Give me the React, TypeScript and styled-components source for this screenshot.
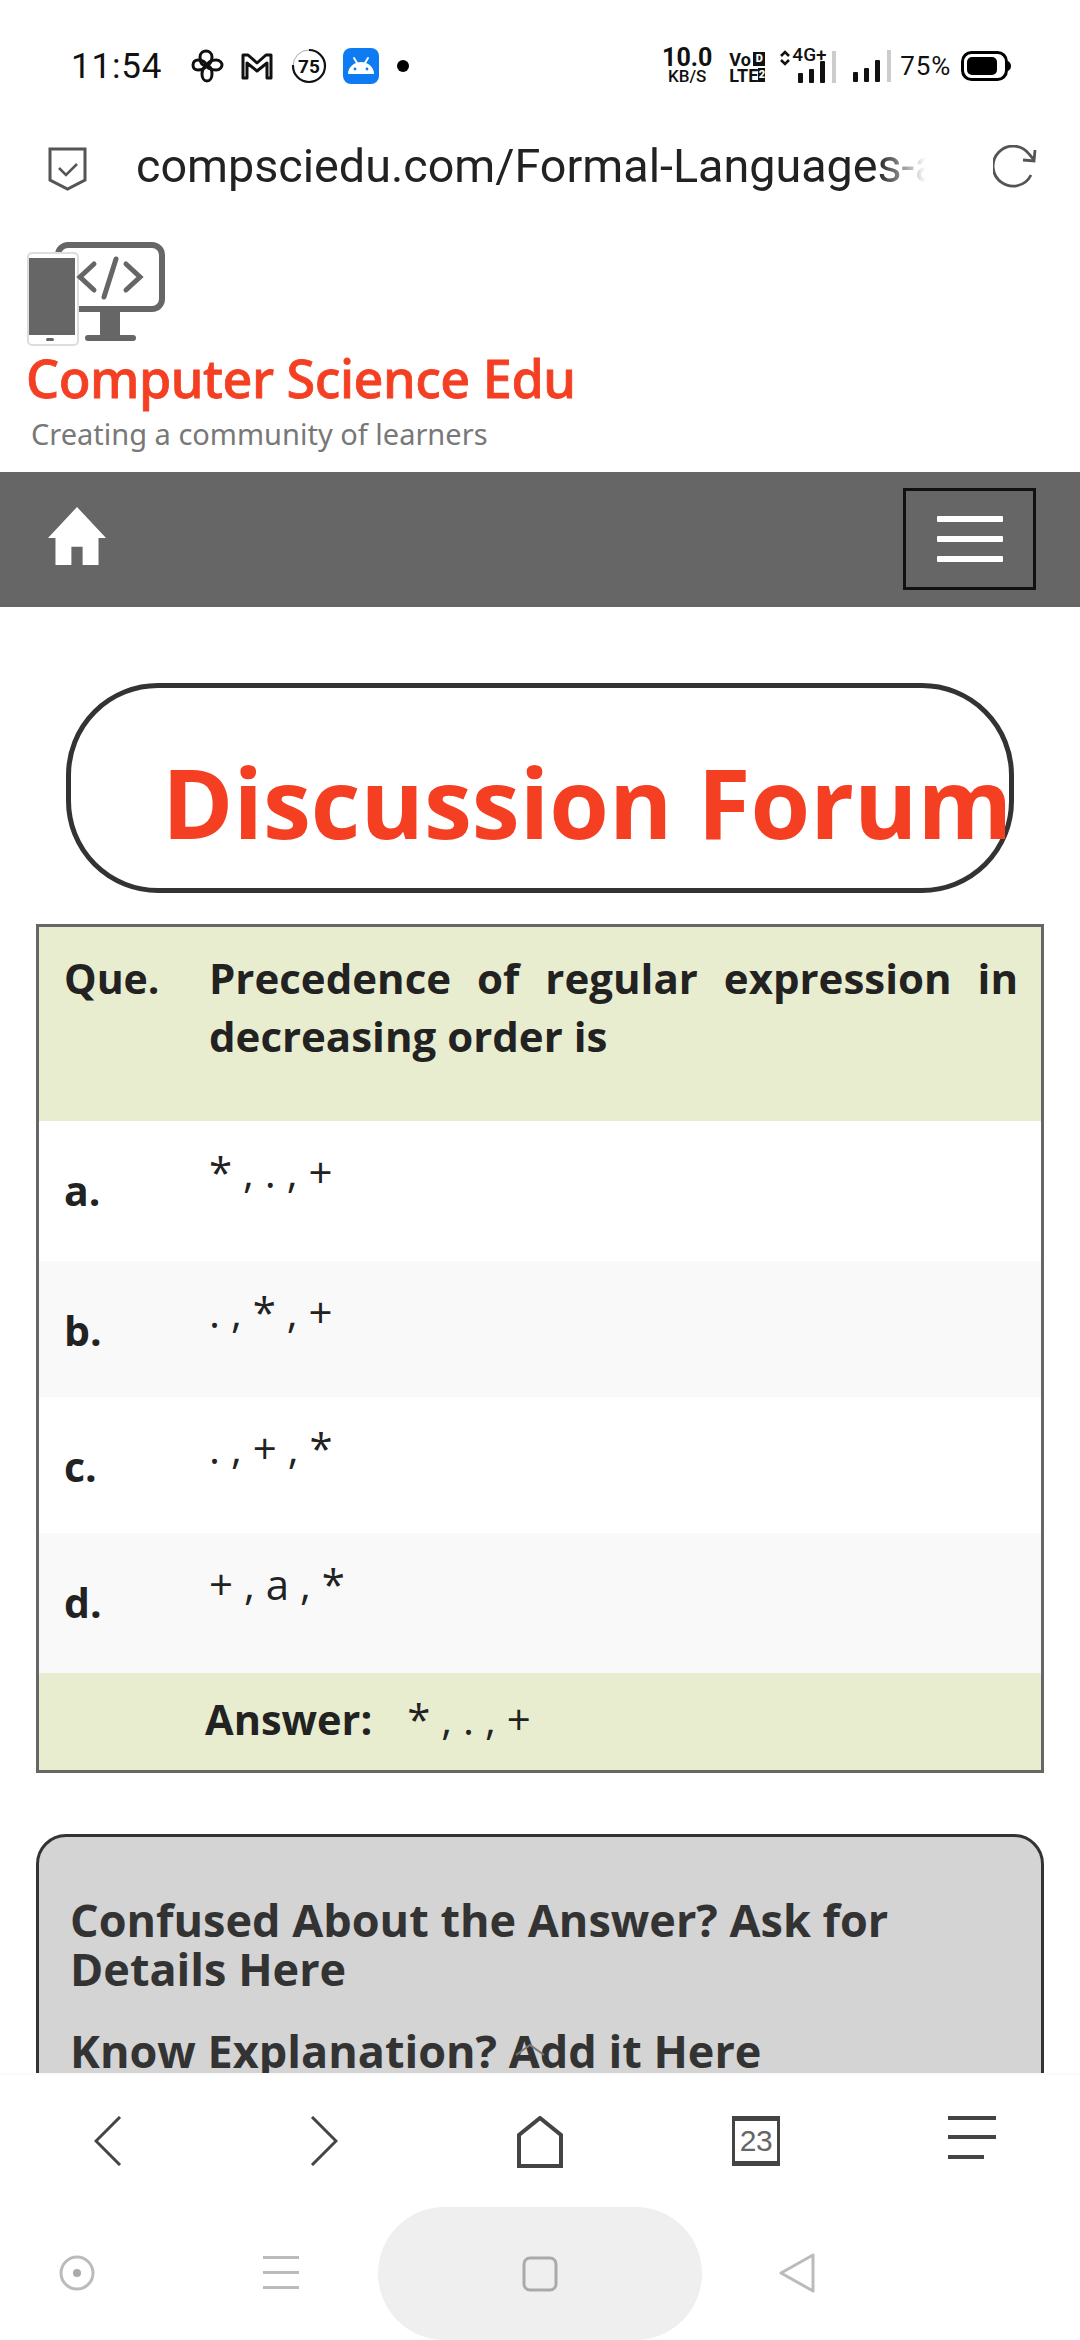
import React from 'react'
import styled, { createGlobalStyle } from 'styled-components'

const GlobalStyle = createGlobalStyle`
  html, body {
    margin: 0;
    padding: 0;
    background: #fff;
  }
`

const Screen = styled.div`
  width: 1080px;
  height: 2340px;
  display: flex;
  flex-direction: column;
  overflow: hidden;
  background: #fff;
  font-family: 'Open Sans', sans-serif;
  color: #222;
`

const StatusBar = styled.div`
  flex: none;
  height: 132px;
  box-sizing: border-box;
  padding: 0 69px 0 71px;
  display: flex;
  align-items: center;
  justify-content: space-between;
  font-family: Roboto, sans-serif;
  color: #111;
`

const StatusGroup = styled.div`
  display: flex;
  align-items: center;
`

const Clock = styled.span`
  font-size: 35px;
  letter-spacing: 0.8px;
  margin-right: 29px;
`

const StatusIcon = styled.svg<{ $gap?: number }>`
  display: block;
  flex: none;
  margin-right: ${(p) => p.$gap ?? 0}px;
`

const Speed = styled.div`
  display: flex;
  flex-direction: column;
  align-items: center;
  font-weight: 700;
  font-size: 25px;
  line-height: 20px;
  margin-right: 17px;

  small {
    font-size: 17px;
    font-weight: 500;
    line-height: 16px;
  }
`

const Volte = styled.div`
  display: flex;
  flex-direction: column;
  font-weight: 700;
  font-size: 18px;
  line-height: 16px;
  margin-right: 15px;
  margin-top: 3px;
`

const VolteLine = styled.div`
  display: flex;
  justify-content: space-between;
  width: 36px;

  b {
    display: inline-block;
    width: 12px;
    height: 14px;
    line-height: 14px;
    background: #111;
    color: #fff;
    font-size: 11px;
    text-align: center;
  }
`

const NetworkSlot = styled.div`
  position: relative;
  width: 58px;
  height: 34px;
  margin-right: 15px;

  span {
    position: absolute;
    left: 12px;
    top: -4px;
    font-size: 19px;
    font-weight: 500;
    line-height: 20px;
  }
`

const Battery = styled.span`
  font-size: 26px;
  letter-spacing: 0.8px;
  margin: 0 10px 0 9px;
`

const AddressBar = styled.div`
  flex: none;
  height: 74px;
  display: flex;
  align-items: center;
  box-sizing: border-box;
  padding: 0 42px 0 48px;
`

const UrlText = styled.div`
  width: 806px;
  margin: -6px 51px 0 49px;
  font-family: Roboto, sans-serif;
  font-size: 46.7px;
  line-height: 60px;
  color: #222;
  white-space: nowrap;
  overflow: hidden;
  mask-image: linear-gradient(to right, #000 92%, transparent 98%);
`

const ReloadSlot = styled.div`
  margin-top: -5px;
`

const SiteHeader = styled.header`
  flex: none;
  height: 266px;
  box-sizing: border-box;
  padding: 36px 0 0 26px;
`

const LogoMark = styled.svg`
  display: block;
  width: 142px;
  height: 106px;
`

const BrandName = styled.div`
  font-family: 'Noto Sans', sans-serif;
  font-size: 52.2px;
  line-height: 60px;
  font-weight: 500;
  color: #f43f22;
  letter-spacing: -0.5px;
  -webkit-text-stroke: 0.8px #f43f22;
`

const Tagline = styled.div`
  margin: 8px 0 0 5px;
  font-family: 'Noto Sans', sans-serif;
  font-size: 29px;
  line-height: 36px;
  color: #787878;
`

const NavBar = styled.nav`
  flex: none;
  height: 135px;
  background: #666;
  display: flex;
  align-items: center;
  justify-content: space-between;
  box-sizing: border-box;
  padding: 0 44px 0 48px;
`

const HomeLink = styled.div`
  margin-top: -8px;
`

const Toggler = styled.div`
  width: 133px;
  height: 102px;
  margin-top: -2px;
  box-sizing: border-box;
  border: 3px solid #111;
  display: flex;
  flex-direction: column;
  align-items: center;
  justify-content: center;
  gap: 14px;

  i {
    display: block;
    width: 66px;
    height: 6px;
    border-radius: 1px;
    background: #fff;
  }
`

const Main = styled.main`
  position: relative;
  flex: 1;
  min-height: 0;
  overflow: hidden;
  padding: 76px 36px 0;
`

const ForumPill = styled.div`
  width: 948px;
  height: 210px;
  margin-left: 30px;
  box-sizing: border-box;
  border: 5px solid #333;
  border-radius: 92px;
  padding: 27px 0 0 91px;
  display: flex;
  align-items: center;
  white-space: nowrap;
  font-size: 96.5px;
  font-weight: 700;
  color: #f43f22;
`

const QuestionTable = styled.div`
  width: 1008px;
  margin-top: 31px;
  box-sizing: border-box;
  border: 3px solid #666;
`

const Row = styled.div<{ $tone: 'head' | 'white' | 'grey'; $height: number }>`
  display: grid;
  grid-template-columns: 170px 1fr;
  height: ${(p) => p.$height}px;
  background: ${(p) => (p.$tone === 'head' ? '#e9edcf' : p.$tone === 'grey' ? '#f9f9f9' : '#fff')};
`

const Label = styled.div<{ $top: number }>`
  padding: ${(p) => p.$top}px 0 0 25px;
  font-size: 41px;
  line-height: 52px;
  font-weight: 700;
  color: #222;
`

const Prompt = styled.div`
  width: 809px;
  padding-top: 22px;
  font-size: 42px;
  line-height: 58px;
  font-weight: 700;
  color: #222;
  text-align: justify;
`

const Choice = styled.div`
  padding-top: 25px;
  font-size: 42px;
  line-height: 52px;
  color: #222;
  white-space: pre;
`

const AnswerRow = styled.div`
  height: 97px;
  box-sizing: border-box;
  background: #e9edcf;
  padding: 20px 0 0 166px;
  display: flex;
  align-items: flex-start;
  font-size: 41.5px;
  line-height: 52px;
  font-weight: 700;
  white-space: pre;
`

const AnswerValue = styled.span`
  margin-left: 35px;
  font-size: 42px;
  font-weight: 400;
`

const AskCard = styled.div`
  width: 1008px;
  margin-top: 61px;
  height: 320px;
  box-sizing: border-box;
  border: 3px solid #333;
  border-radius: 30px;
  background: #d4d4d4;
  padding: 58px 0 0 31px;
  color: #333;
`

const AskTitle = styled.div<{ $gap?: number }>`
  width: 900px;
  margin-top: ${(p) => p.$gap ?? 0}px;
  font-size: 45px;
  line-height: 49px;
  font-weight: 700;
`

const ScrollHint = styled.svg`
  position: absolute;
  left: 508px;
  bottom: 12px;
  width: 44px;
  height: 20px;
`

const BrowserBar = styled.div`
  flex: none;
  height: 122px;
  box-sizing: border-box;
  border-top: 2px solid #fafafa;
  padding-top: 41px;
  display: grid;
  grid-template-columns: repeat(5, 216px);
  align-items: start;
  justify-items: center;
`

const TabCount = styled.div`
  width: 48px;
  height: 50px;
  box-sizing: border-box;
  border: 3px solid #444;
  border-top-width: 5px;
  border-bottom-width: 5px;
  font-family: 'Liberation Sans', sans-serif;
  font-size: 30px;
  line-height: 40px;
  letter-spacing: -0.5px;
  text-align: center;
  color: #666;
`

const SystemBar = styled.div`
  flex: none;
  height: 145px;
  display: flex;
  align-items: center;
  box-sizing: border-box;
  padding: 10px 0 0 59px;
`

const HomePill = styled.div`
  width: 324px;
  height: 133px;
  margin: 2px 76px 0 77px;
  align-self: flex-start;
  background: #efefef;
  border-radius: 80px;
  display: flex;
  align-items: center;
  justify-content: center;
`

const stroke = '#444'

const Pinwheel = () => (
  <StatusIcon $gap={17} width="33" height="34" viewBox="0 0 33 34" fill="none" stroke="#111" strokeWidth="3">
    <path d="M16 17C10 17 9 12 9 8c0-4 3-6 6-6s6 2 6 6c0 4-2 7-5 9Z" />
    <path d="M16 17c0-4 5-6 9-6 4 0 6 3 6 5s-2 5-6 5c-5 0-9-2-9-4Z" />
    <path d="M16 17c5 0 5 5 5 8 0 4-2 7-5 7-3 0-5-3-5-7 0-4 2-8 5-8Z" />
    <path d="M16 17c-3 3-6 4-9 4-3 0-5-2-5-5s2-5 5-5c5 0 8 3 9 6Z" />
  </StatusIcon>
)

const MailMark = () => (
  <StatusIcon $gap={18} width="32" height="28" viewBox="0 0 32 28" fill="none" stroke="#111" strokeWidth="3" strokeLinejoin="round">
    <path d="M2 3h5l9 8 9-8h5v23h-4V11l-10 8-10-8v15H2Z" />
  </StatusIcon>
)

const DataRing = () => (
  <StatusIcon $gap={16} width="36" height="36" viewBox="0 0 36 36">
    <circle cx="18" cy="18" r="16" fill="none" stroke="#aaa" strokeWidth="1" />
    <circle cx="18" cy="18" r="16" fill="none" stroke="#111" strokeWidth="2.2" strokeDasharray="76 25" transform="rotate(-90 18 18)" />
    <text x="18" y="25" textAnchor="middle" fontFamily="Roboto, sans-serif" fontWeight="700" fontSize="19" fill="#111">
      75
    </text>
  </StatusIcon>
)

const AndroidBadge = () => (
  <StatusIcon $gap={18} width="36" height="36" viewBox="0 0 36 36">
    <rect width="36" height="36" rx="8" fill="#0f7bf2" />
    <path d="M5 26c0-7 6-12 13-12s13 5 13 12Z" fill="#fff" />
    <path d="M11 10l3 5M25 10l-3 5" stroke="#fff" strokeWidth="2" strokeLinecap="round" />
    <circle cx="12" cy="21" r="1.4" fill="#0f7bf2" />
    <circle cx="24" cy="21" r="1.4" fill="#0f7bf2" />
  </StatusIcon>
)

const Dot = () => (
  <StatusIcon width="12" height="12" viewBox="0 0 12 12">
    <circle cx="6" cy="6" r="6" fill="#000" />
  </StatusIcon>
)

const BarsIcon = ({ left }: { left: number }) => (
  <g fill="#111">
    <rect x={left} y="24" width="5" height="10" rx="1" />
    <rect x={left + 11} y="20" width="5" height="14" rx="1" />
    <rect x={left + 22} y="12" width="5" height="22" rx="1" />
    <rect x={left + 34} y="2" width="4" height="32" fill="#ccc" />
  </g>
)

const ShieldIcon = () => (
  <svg width="39" height="44" viewBox="0 0 39 44" fill="none" style={{ flex: 'none' }}>
    <path d="M2 2h35v31l-17.500 9L2 33Z" stroke="#555" strokeWidth="3" />
    <path d="M11 21l7 7 11-11" stroke="#555" strokeWidth="2.500" />
  </svg>
)

const ReloadIcon = () => (
  <svg width="44" height="44" viewBox="0 0 44 44" fill="none" stroke="#555" strokeWidth="2.800" style={{ display: 'block' }}>
    <path d="M38 30A20 20 0 1 1 36 9l5 6" />
    <path d="M42 5l-1 11-11-1" />
  </svg>
)

const HomeIcon = () => (
  <svg width="58" height="58" viewBox="0 0 62 60" preserveAspectRatio="none" fill="#fff" style={{ display: 'block' }}>
    <path d="M31 0 62 32H54V60H37V41H25V60H8V32H0Z" />
  </svg>
)

const Logo = () => (
  <LogoMark viewBox="0 0 142 106">
    <rect x="32" y="3" width="104" height="64" rx="10" fill="#fff" stroke="#666" strokeWidth="6" />
    <rect x="74" y="68" width="20" height="27" fill="#666" />
    <rect x="59" y="93" width="51" height="6" rx="3" fill="#666" />
    <rect x="2" y="11" width="50" height="92" rx="4" fill="#fff" stroke="#ddd" strokeWidth="2" />
    <rect x="3" y="16" width="46" height="77" fill="#666" />
    <rect x="20" y="96" width="8" height="3" rx="1.500" fill="#666" />
    <path d="M68 22 54 35l14 13M100 22l14 13-14 13M90 17 78 55" fill="none" stroke="#666" strokeWidth="5" strokeLinecap="round" />
  </LogoMark>
)

const ChevronIcon = ({ flip }: { flip?: boolean }) => (
  <svg width="28" height="50" viewBox="0 0 28 50" fill="none" stroke={stroke} strokeWidth="3">
    <path d={flip ? 'M2 1l24 24-24 24' : 'M26 1 2 25l24 24'} />
  </svg>
)

const TabHomeIcon = () => (
  <svg width="46" height="52" viewBox="0 0 46 52" fill="none" stroke={stroke} strokeWidth="4">
    <path d="M2 50V19L23 2l21 17v31Z" />
  </svg>
)

const MenuIcon = () => (
  <svg width="48" height="44" viewBox="0 0 48 44" fill={stroke}>
    <rect y="0" width="48" height="4" />
    <rect y="19" width="48" height="4" />
    <rect y="39" width="36" height="4" />
  </svg>
)

const SysCircle = () => (
  <svg width="36" height="36" viewBox="0 0 36 36" fill="none" style={{ marginRight: 168 }}>
    <circle cx="18" cy="18" r="16" stroke="#bbb" strokeWidth="3" />
    <circle cx="18" cy="18" r="4" fill="#aaa" />
  </svg>
)

const SysLines = () => (
  <svg width="38" height="34" viewBox="0 0 38 34" fill="#bbb">
    <rect y="0" width="36" height="3" />
    <rect y="15" width="36" height="3" />
    <rect y="30" width="36" height="3" />
  </svg>
)

const SysSquare = () => (
  <svg width="36" height="36" viewBox="0 0 36 36" fill="none">
    <rect x="2" y="2" width="32" height="32" rx="6" stroke="#aaa" strokeWidth="3" />
  </svg>
)

const SysBack = () => (
  <svg width="38" height="40" viewBox="0 0 38 40" fill="none">
    <path d="M35 2v36L3 20Z" stroke="#bbb" strokeWidth="3" strokeLinejoin="round" />
  </svg>
)

const choices = [
  { key: 'a.', value: '* , . , +', tone: 'white', height: 140, top: 43 },
  { key: 'b.', value: '. , * , +', tone: 'grey', height: 136, top: 43 },
  { key: 'c.', value: '. , + , *', tone: 'white', height: 136, top: 43 },
  { key: 'd.', value: '+ , a , *', tone: 'grey', height: 140, top: 43 },
] as const

export default function App() {
  return (
    <Screen>
      <GlobalStyle />
      <StatusBar>
        <StatusGroup>
          <Clock>11:54</Clock>
          <Pinwheel />
          <MailMark />
          <DataRing />
          <AndroidBadge />
          <Dot />
        </StatusGroup>
        <StatusGroup>
          <Speed>
            10.0
            <small>KB/S</small>
          </Speed>
          <Volte>
            <VolteLine>
              Vo<b>D</b>
            </VolteLine>
            <VolteLine>
              LTE<b>2</b>
            </VolteLine>
          </Volte>
          <NetworkSlot>
            <span>4G+</span>
            <svg width="58" height="36" viewBox="0 0 58 36" style={{ display: 'block' }}>
              <path d="M1 7l4-4 4 4M1 11l4 4 4-4" fill="none" stroke="#111" strokeWidth="2.500" />
              <BarsIcon left={18} />
            </svg>
          </NetworkSlot>
          <svg width="38" height="36" viewBox="0 0 38 36" style={{ display: 'block' }}>
            <BarsIcon left={0} />
          </svg>
          <Battery>75%</Battery>
          <svg width="50" height="30" viewBox="0 0 50 30">
            <rect x="1.500" y="1.500" width="44" height="27" rx="9" fill="none" stroke="#000" strokeWidth="3" />
            <rect x="6" y="6" width="30" height="18" rx="5" fill="#000" />
            <path d="M47 10c2 1 3 3 3 5s-1 4-3 5Z" fill="#000" />
          </svg>
        </StatusGroup>
      </StatusBar>

      <AddressBar>
        <ShieldIcon />
        <UrlText>compsciedu.com/Formal-Languages-and-Automata</UrlText>
        <ReloadSlot>
          <ReloadIcon />
        </ReloadSlot>
      </AddressBar>

      <SiteHeader>
        <Logo />
        <BrandName>Computer Science Edu</BrandName>
        <Tagline>Creating a community of learners</Tagline>
      </SiteHeader>

      <NavBar>
        <HomeLink>
          <HomeIcon />
        </HomeLink>
        <Toggler>
          <i />
          <i />
          <i />
        </Toggler>
      </NavBar>

      <Main>
        <ForumPill>Discussion Forum</ForumPill>

        <QuestionTable>
          <Row $tone="head" $height={194}>
            <Label $top={25}>Que.</Label>
            <Prompt>Precedence of regular expression in decreasing order is</Prompt>
          </Row>
          {choices.map((c) => (
            <Row key={c.key} $tone={c.tone} $height={c.height}>
              <Label $top={c.top}>{c.key}</Label>
              <Choice>{c.value}</Choice>
            </Row>
          ))}
          <AnswerRow>
            Answer:
            <AnswerValue>{'* , . , +'}</AnswerValue>
          </AnswerRow>
        </QuestionTable>

        <AskCard>
          <AskTitle>Confused About the Answer? Ask for Details Here</AskTitle>
          <AskTitle $gap={33}>Know Explanation? Add it Here</AskTitle>
        </AskCard>

        <ScrollHint viewBox="0 0 44 20" fill="none" stroke="#777" strokeWidth="2">
          <path d="M8 14 22 4l14 10" />
        </ScrollHint>
      </Main>

      <BrowserBar>
        <ChevronIcon />
        <ChevronIcon flip />
        <TabHomeIcon />
        <TabCount>23</TabCount>
        <MenuIcon />
      </BrowserBar>

      <SystemBar>
        <SysCircle />
        <SysLines />
        <HomePill>
          <SysSquare />
        </HomePill>
        <SysBack />
      </SystemBar>
    </Screen>
  )
}
